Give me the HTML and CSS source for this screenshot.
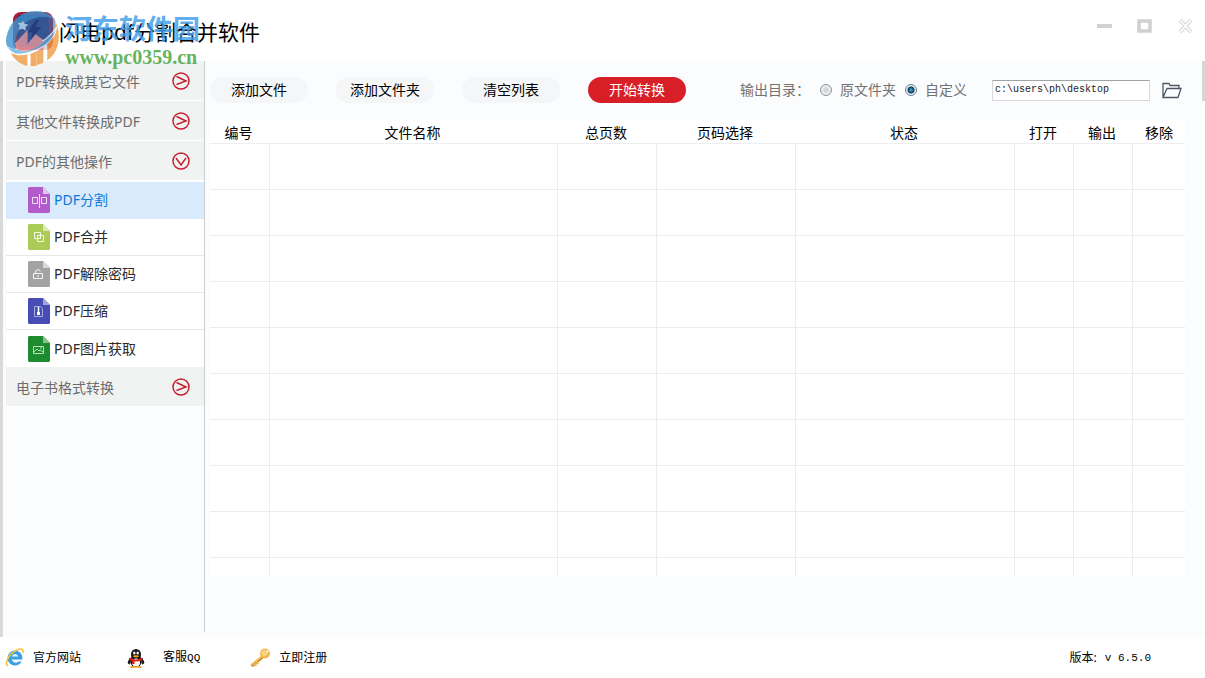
FILE: index.html
```html
<!DOCTYPE html>
<html lang="zh-CN">
<head>
<meta charset="utf-8">
<meta name="viewport" content="width=device-width, initial-scale=1">
<title>闪电pdf分割合并软件</title>
<link rel="stylesheet" href="styles.css">
</head>
<body>
<svg class="defs" aria-hidden="true">
  <symbol id="go" viewBox="0 0 18 18"><circle cx="9" cy="9" r="8" fill="none" stroke="#c4202f" stroke-width="1.5"/><path d="M4.500 4.500 14 9 4.500 12.500" fill="none" stroke="#c4202f" stroke-width="1.5"/></symbol>
  <symbol id="down" viewBox="0 0 18 18"><circle cx="9" cy="9" r="8" fill="none" stroke="#c4202f" stroke-width="1.5"/><path d="M4 6 9 13 14 6" fill="none" stroke="#c4202f" stroke-width="1.5"/></symbol>
</svg>
<div class="app">
  <header class="titlebar">
    <svg class="logo" viewBox="0 0 42 42" aria-hidden="true">
      <rect x="1" y="2" width="40" height="38" rx="8" fill="#a91d35"/>
      <rect x="5" y="5" width="32" height="32" rx="4" fill="#28306f"/>
    </svg>
    <h1 class="title">闪电pdf分割合并软件</h1>
    <div class="watermark">
      <svg class="mark" viewBox="0 0 58 58" aria-hidden="true">
        <path d="M1 30C3 12 16 0 31 0c9 0 16 3 20 9C40 4 29 6 20 13 12 20 9 30 11 40 5 40 1 37 1 30z" fill="#3d93cf"/>
        <path d="M11 40C9 30 12 20 20 13 29 6 40 4 51 9l1 9C44 29 28 38 11 40z" fill="#3f6fae" opacity=".75"/>
        <path d="M52 12c7 18 1 38-20 43V40c8-5 16-12 20-28z" fill="#f19a45"/>
        <path d="M6 43q8 3 17 0v13C15 54 9 49 6 43z" fill="#f19a45"/>
        <path d="m10 33 13-14v15l7-11 14 10q-5 7-15 10-11 3-17-1z" fill="#eaa0a6"/>
        <path d="M23 36h8v20h-8z" fill="#fff"/>
        <path d="M26 38h6v18h-6z" fill="#f19a45"/>
        <path d="M39 34h4v17l-4 2z" fill="#fff"/>
        <path d="m31 9-8 13h5l-2 8 11-14h-6l4-7z" fill="#27407f"/>
        <path d="M3 36q8 6 24 0Q44 29 53 15q0 11-12 20-14 11-28 10-8-2-10-9z" fill="#fff"/>
        <path d="M3 37q9 5 24 0 16-6 25-19-3 13-18 20-15 7-24 5-5-2-7-6z" fill="#65b3e0"/>
        <path d="M12 37q11 0 22-7 4 0 5 2-9 8-20 9-6 0-7-4z" fill="#eaa0a6"/>
        <path d="m18 10 2 3 4 1-3 2v4l-3-2-4 1 1-4-2-3h4z" fill="#c5e4f7"/>
      </svg>
      <div class="marktext">
        <span class="markname">河东软件园</span>
        <span class="markurl">www.pc0359.cn</span>
      </div>
    </div>
    <div class="winbtns">
      <button type="button" aria-label="最小化"><svg viewBox="0 0 16 16"><path d="M1 8h15" stroke="#d2d2d2" stroke-width="4"/></svg></button>
      <button type="button" aria-label="最大化"><svg viewBox="0 0 16 16"><path d="M2 3h11v10H2z" fill="none" stroke="#d0d0d0" stroke-width="3.500"/></svg></button>
      <button type="button" aria-label="关闭"><svg viewBox="0 0 16 16"><path d="m2 2 11 12M13 2 2 14" stroke="#ced4da" stroke-width="4"/><path d="m2 2 11 12M13 2 2 14" stroke="#f8fafc" stroke-width="2"/></svg></button>
    </div>
  </header>
  <div class="body">
    <nav class="sidebar">
      <button type="button" class="group">PDF转换成其它文件<svg><use href="#go"/></svg></button>
      <button type="button" class="group">其他文件转换成PDF<svg><use href="#go"/></svg></button>
      <button type="button" class="group">PDF的其他操作<svg><use href="#down"/></svg></button>
      <ul class="items">
        <li><a href="#" class="item active"><svg viewBox="0 0 22 26"><path d="M1 0h14l7 7v18l-1 1H1l-1-1V1z" fill="#b25ccb"/><path d="M15 0v7h7z" fill="#e3c3ec"/><path d="M11.500 7v14M9.500 10.500h-5v6h5zM13.500 10.500h5v6h-5z" fill="none" stroke="#f3e0f7"/></svg>PDF分割</a></li>
        <li><a href="#" class="item"><svg viewBox="0 0 22 26"><path d="M1 0h14l7 7v18l-1 1H1l-1-1V1z" fill="#abcb57"/><path d="M15 0v7h7z" fill="#deebbd"/><path d="M6.500 8.500h6v6h-6zM9.500 11.500h6v6h-6z" fill="none" stroke="#f5fae8"/></svg>PDF合并</a></li>
        <li><a href="#" class="item"><svg viewBox="0 0 22 26"><path d="M1 0h14l7 7v18l-1 1H1l-1-1V1z" fill="#a3a3a3"/><path d="M15 0v7h7z" fill="#d8d8d8"/><path d="M5.500 12.500h9v5h-9zM7.500 12v-2q2.500-3 5 0M10 14v2" fill="none" stroke="#f5f5f5"/></svg>PDF解除密码</a></li>
        <li><a href="#" class="item"><svg viewBox="0 0 22 26"><path d="M1 0h14l7 7v18l-1 1H1l-1-1V1z" fill="#474db4"/><path d="M15 0v7h7z" fill="#a2a5dc"/><path d="M6.500 8.500h6l2 2v8h-8z" fill="none" stroke="#a9adde"/><path d="M10.500 9v5" stroke="#fff" stroke-width="1.500"/><path d="M9 14h3v3H9z" fill="#fff"/></svg>PDF压缩</a></li>
        <li><a href="#" class="item"><svg viewBox="0 0 22 26"><path d="M1 0h14l7 7v18l-1 1H1l-1-1V1z" fill="#1d8b2e"/><path d="M15 0v7h7z" fill="#86c48e"/><path d="M5.500 10.500h10v7h-10zM6 16l3-3 2 2 1-1 3 2M12 12h2" fill="none" stroke="#b5e2ba"/></svg>PDF图片获取</a></li>
      </ul>
      <button type="button" class="group">电子书格式转换<svg><use href="#go"/></svg></button>
    </nav>
    <main class="main">
      <div class="toolbar">
        <div class="actions">
          <button type="button" class="pill">添加文件</button>
          <button type="button" class="pill">添加文件夹</button>
          <button type="button" class="pill">清空列表</button>
          <button type="button" class="pill start">开始转换</button>
        </div>
        <div class="output">
          <span class="outlabel">输出目录：</span>
          <label><input type="radio" name="dir">原文件夹</label>
          <label><input type="radio" name="dir" checked>自定义</label>
          <input type="text" class="path" aria-label="输出目录" value="c:\users\ph\desktop">
          <button type="button" class="browse" aria-label="浏览"><svg viewBox="0 0 20 16"><path d="M1 15V1h6l1 2h9v3M1 15 5 6h14l-3 9z" fill="none" stroke="#4d5763" stroke-width="1.300"/></svg></button>
        </div>
      </div>
      <table class="files">
        <colgroup><col class="c-no"><col class="c-name"><col class="c-pages"><col class="c-sel"><col><col class="c-op"><col class="c-op"><col class="c-last"></colgroup>
        <thead><tr><th>编号</th><th>文件名称</th><th>总页数</th><th>页码选择</th><th>状态</th><th>打开</th><th>输出</th><th>移除</th></tr></thead>
        <tbody>
          <tr><td></td><td></td><td></td><td></td><td></td><td></td><td></td><td></td></tr>
          <tr><td></td><td></td><td></td><td></td><td></td><td></td><td></td><td></td></tr>
          <tr><td></td><td></td><td></td><td></td><td></td><td></td><td></td><td></td></tr>
          <tr><td></td><td></td><td></td><td></td><td></td><td></td><td></td><td></td></tr>
          <tr><td></td><td></td><td></td><td></td><td></td><td></td><td></td><td></td></tr>
          <tr><td></td><td></td><td></td><td></td><td></td><td></td><td></td><td></td></tr>
          <tr><td></td><td></td><td></td><td></td><td></td><td></td><td></td><td></td></tr>
          <tr><td></td><td></td><td></td><td></td><td></td><td></td><td></td><td></td></tr>
          <tr><td></td><td></td><td></td><td></td><td></td><td></td><td></td><td></td></tr>
          <tr class="tail"><td></td><td></td><td></td><td></td><td></td><td></td><td></td><td></td></tr>
        </tbody>
      </table>
    </main>
    <div class="edge"></div>
  </div>
  <footer class="footer">
    <a href="#" class="site"><svg viewBox="0 0 20 20"><circle cx="10" cy="10" r="7.500" fill="#3a9fe6"/><path d="M6.500 8.500q3.500-5 7 0zM6.500 11.500h11v2h-4q-4 3.500-7-2z" fill="#f4fbff"/><path d="M3 18C-1 16 4 6 10 3c5-3 9-3 8 2" fill="none" stroke="#f2c53d" stroke-width="1.600"/></svg>官方网站</a>
    <a href="#" class="qq"><svg viewBox="0 0 20 20"><ellipse cx="10" cy="13" rx="6" ry="6" fill="#161616"/><path d="M4 10 2 15l2 1M16 10l2 5-2 1" fill="#161616" stroke="#161616"/><ellipse cx="10" cy="6.500" rx="5" ry="5.500" fill="#161616"/><ellipse cx="10" cy="14.500" rx="4" ry="4" fill="#fff"/><ellipse cx="8.300" cy="5" rx="1.200" ry="1.600" fill="#fff"/><ellipse cx="11.700" cy="5" rx="1.200" ry="1.600" fill="#fff"/><ellipse cx="10" cy="8.300" rx="3" ry="1.100" fill="#f3a31c"/><path d="M4 9.500q6 4 12 0l.5 2.500q-4 2-8 1.500V16H6v-3l-2.500-1z" fill="#d9261c"/><ellipse cx="7" cy="19" rx="3" ry="1" fill="#f3a31c"/><ellipse cx="13" cy="19" rx="3" ry="1" fill="#f3a31c"/></svg><span>客服<span class="num">QQ</span></span></a>
    <a href="#" class="reg"><svg viewBox="0 0 20 20"><path d="m12 9-11 9" stroke="#c98a2c" stroke-width="3"/><path d="m12 8-11 9M4 16l2 2M6 14l2 2" stroke="#eebb59" stroke-width="1.800"/><circle cx="14.500" cy="5.500" r="5" fill="#efb850"/><circle cx="14" cy="5" r="3" fill="#f7d384"/><circle cx="17" cy="3.500" r="1" fill="#fff"/></svg>立即注册</a>
    <div class="version"><span>版本:</span><span class="num">v 6.5.0</span></div>
  </footer>
</div>
</body>
</html>
```
FILE: styles.css
```css
* { box-sizing: border-box; }
body {
  margin: 0;
  background: #fff;
  color: #111;
  font: 14px/20px "Noto Sans", "Noto Sans CJK SC", sans-serif;
}
button { margin: 0; padding: 0; border: 0; background: none; font: inherit; color: inherit; }
a { color: inherit; text-decoration: none; }
svg { display: block; }
.defs { position: absolute; width: 0; height: 0; }
.app { display: flex; flex-direction: column; min-height: 100vh; }

.titlebar { position: relative; display: flex; align-items: center; height: 61px; padding: 0 12px; }
.logo { width: 42px; height: 42px; margin-right: 5px; }
.title { flex: 1; margin: 2px 0 0; font-size: 21px; line-height: 32px; font-weight: 400; color: #000; }
.watermark { position: absolute; left: 5px; top: 11px; z-index: 1; display: flex; gap: 3px; opacity: .8; pointer-events: none; }
.mark { width: 57px; height: 57px; }
.marktext { display: flex; flex-direction: column; }
.markname { font-size: 27px; line-height: 36px; font-weight: 700; color: #3d9ce8; }
.markurl { font: bold 20px/20px "Liberation Serif", serif; color: #3fa336; }
.winbtns { display: flex; align-items: center; gap: 25px; align-self: flex-start; padding-top: 18px; margin-right: -1px; }
.winbtns svg { width: 16px; height: 16px; }

.body { flex: 1; display: flex; background: #fbfcfe; border-left: 3px solid #d9d9d9; }
.sidebar { width: 202px; padding-left: 3px; margin-bottom: 5px; border-right: 1px solid #ccced0; }
.group {
  display: flex; align-items: center; justify-content: space-between;
  width: 100%; height: 40px; padding: 2px 14px 0 10px;
  background: #f1f3f3; border-bottom: 1px solid #fff;
  color: #6c6c6c; text-align: left;
}
.group svg { width: 18px; height: 18px; margin-bottom: 2px; }
.items { margin: 0; padding: 1px 0 0; list-style: none; background: #fff; }
.item {
  display: flex; align-items: center; gap: 4px;
  height: 37px; padding-left: 22px;
  border-bottom: 1px solid #e6e8ea; color: #2a2a2a;
}
.items li:last-child .item { border-bottom: 0; }
.item svg { width: 22px; height: 26px; }
.item.active { background: #d8eafc; color: #0b78d8; border-color: #d8eafc; }

.main { flex: 1; padding: 16px 17px 0 5px; }
.toolbar { display: flex; justify-content: space-between; align-items: center; height: 26px; margin-bottom: 17px; }
.actions { display: flex; gap: 28px; }
.pill { width: 98px; height: 26px; border-radius: 13px; background: #f5f6f7; color: #000; }
.start { background: #d81e26; color: #fff; }
.output { display: flex; align-items: center; color: #727272; }
.outlabel { margin-right: 10px; }
.output label { display: flex; align-items: center; gap: 8px; margin-right: 9px; }
input[type="radio"] {
  appearance: none; width: 12px; height: 12px; margin: 0;
  border: 1px solid #8e9398; border-radius: 50%;
  background: radial-gradient(circle, #ccc 0, #eee 60%);
}
input[type="radio"]:checked { border-color: #6c8391; background: radial-gradient(circle at 50% 50%, #49b3d8 0, #0d3a59 3px, #e8f0f5 4px); }
.path {
  width: 158px; height: 21px; margin-left: 16px; padding: 0 2px 1px;
  border: 1px solid #d5d8dc; border-top-color: #a0a3a8; background: #fff;
  font: 10px "Liberation Mono", monospace; color: #222;
}
.browse { margin: 0 3px 0 12px; }
.browse svg { width: 20px; height: 17px; }

.files { width: 100%; border-collapse: separate; border-spacing: 0; table-layout: fixed; background: #fff; }
.files th { height: 24px; padding: 2px 3px 0 0; font-weight: 400; line-height: 20px; color: #000; border-bottom: 1px solid #eceef0; }
.files th:last-child { padding-right: 0; }
.files td { height: 46px; padding: 0; border-right: 1px solid #eaecee; border-bottom: 1px solid #eaecee; }
.files td:last-child { border-right: 0; }
.files .tail td { height: 18px; border-bottom: 0; }
.c-no { width: 60px; }
.c-name { width: 288px; }
.c-pages { width: 99px; }
.c-sel { width: 139px; }
.c-op { width: 59px; }
.c-last { width: 52px; }
.edge { width: 3px; height: 40px; background: #d6d6d6; }

.footer { display: flex; align-items: center; height: 41px; padding-left: 5px; font-size: 12px; color: #000; }
.footer a { display: flex; align-items: center; }
.footer svg { width: 20px; height: 20px; }
.site { gap: 8px; }
.qq { gap: 17px; margin-left: 45px; }
.reg { gap: 8px; margin-left: 50px; }
.reg svg { width: 21px; }
.version { display: flex; gap: 8px; margin-left: auto; padding-right: 54px; }
.num { font-family: "Liberation Mono", monospace; font-size: 11px; }
```
